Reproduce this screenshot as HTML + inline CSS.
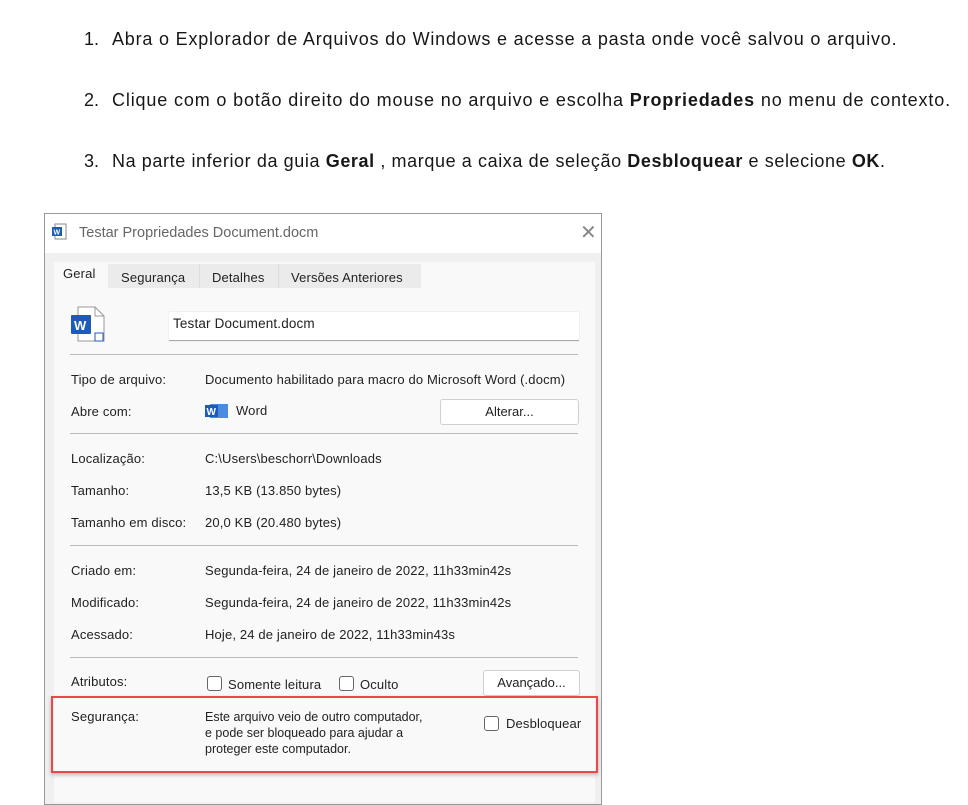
<!DOCTYPE html>
<html><head><meta charset="utf-8"><style>
body{margin:0;width:968px;height:796px;background:#fff;position:relative;overflow:hidden;font-family:"Liberation Sans",sans-serif;color:#1e1e1e}
.a{position:absolute;white-space:nowrap}
.li{font-size:18px;color:#171717;letter-spacing:0.8px}
.n{position:absolute;left:84px;font-size:18px;color:#171717}
.d{font-size:13px;color:#222;letter-spacing:0.15px}
.cb{position:absolute;width:13px;height:13px;border:1px solid #666;border-radius:3px;background:#fff}
.hr{position:absolute;left:70px;width:508px;height:1px;background:#bbb}
.btn{position:absolute;background:#fff;border:1px solid #d0d0d0;border-radius:3px;font-size:13px;text-align:center;color:#222}
</style></head><body>
<div class="n" style="top:29px">1.</div>
<div class="a li" style="left:112px;top:29px">Abra o Explorador de Arquivos do Windows e acesse a pasta onde você salvou o arquivo.</div>
<div class="n" style="top:90px">2.</div>
<div class="a li" style="left:112px;top:90px;letter-spacing:0.85px">Clique com o botão direito do mouse no arquivo e escolha <b>Propriedades</b> no menu de contexto.</div>
<div class="n" style="top:151px">3.</div>
<div class="a li" style="left:112px;top:151px;letter-spacing:0.6px">Na parte inferior da guia <b>Geral</b> , marque a caixa de seleção <b>Desbloquear</b> e selecione <b>OK</b>.</div>

<div class="a" style="left:44px;top:213px;width:556px;height:590px;border:1px solid #999;background:#f0f0f0"></div>
<div class="a" style="left:45px;top:214px;width:556px;height:39px;background:#fff"></div>
<svg class="a" style="left:51px;top:223px" width="18" height="20"><rect x="4" y="1" width="11" height="15" fill="#fff" stroke="#888"/><rect x="1" y="4" width="10" height="9" fill="#1e5bb8"/><text x="2.5" y="11.5" font-size="7" fill="#fff" font-family="Liberation Sans" font-weight="bold">W</text></svg>
<div class="a" style="left:79px;top:225px;font-size:14.5px;color:#666">Testar Propriedades Document.docm</div>
<div class="a" style="left:580px;top:220px;font-size:20px;color:#888">✕</div>
<div class="a" style="left:54px;top:262px;width:541px;height:540px;background:#f9f9f9"></div>
<div class="a d" style="left:63px;top:266px">Geral</div>
<div class="a" style="left:108px;top:264px;width:313px;height:24px;background:#ebebeb"></div>
<div class="a" style="left:199px;top:264px;width:1px;height:24px;background:#ddd"></div>
<div class="a" style="left:278px;top:264px;width:1px;height:24px;background:#ddd"></div>
<div class="a d" style="left:121px;top:270px">Segurança</div>
<div class="a d" style="left:212px;top:270px">Detalhes</div>
<div class="a d" style="left:291px;top:270px">Versões Anteriores</div>
<svg class="a" style="left:68px;top:305px" width="45" height="40"><path d="M10 2h17l9 9v25H10z" fill="#fff" stroke="#999"/><path d="M27 2v9h9" fill="none" stroke="#999"/><rect x="3" y="10" width="20" height="19" rx="1" fill="#1e5bb8"/><text x="6" y="25" font-size="13" fill="#fff" font-weight="bold" font-family="Liberation Sans">W</text><path d="M27 28h8v8h-8z" fill="none" stroke="#1e5bb8"/></svg>
<div class="a" style="left:169px;top:312px;width:410px;height:28px;background:#fff;border-bottom:1px solid #aaa;box-shadow:0 0 1px #ccc"></div>
<div class="a d" style="left:173px;top:316px;font-size:13.5px">Testar Document.docm</div>
<div class="hr" style="top:354px"></div>
<div class="a d" style="left:71px;top:372px">Tipo de arquivo:</div>
<div class="a d" style="left:205px;top:372px">Documento habilitado para macro do Microsoft Word (.docm)</div>
<div class="a d" style="left:71px;top:404px">Abre com:</div>
<svg class="a" style="left:205px;top:403px" width="24" height="16"><rect x="5" y="1" width="18" height="14" fill="#4a8ae0"/><rect x="0" y="2" width="13" height="12" fill="#1e5bb8"/><text x="1.5" y="12" font-size="10" fill="#fff" font-weight="bold" font-family="Liberation Sans">W</text></svg>
<div class="a d" style="left:236px;top:403px">Word</div>
<div class="btn" style="left:440px;top:399px;width:137px;height:24px;line-height:24px">Alterar...</div>
<div class="hr" style="top:433px"></div>
<div class="a d" style="left:71px;top:451px">Localização:</div>
<div class="a d" style="left:205px;top:451px">C:\Users\beschorr\Downloads</div>
<div class="a d" style="left:71px;top:483px">Tamanho:</div>
<div class="a d" style="left:205px;top:483px">13,5 KB (13.850 bytes)</div>
<div class="a d" style="left:71px;top:515px">Tamanho em disco:</div>
<div class="a d" style="left:205px;top:515px">20,0 KB (20.480 bytes)</div>
<div class="hr" style="top:545px"></div>
<div class="a d" style="left:71px;top:563px">Criado em:</div>
<div class="a d" style="left:205px;top:563px">Segunda-feira, 24 de janeiro de 2022, 11h33min42s</div>
<div class="a d" style="left:71px;top:595px">Modificado:</div>
<div class="a d" style="left:205px;top:595px">Segunda-feira, 24 de janeiro de 2022, 11h33min42s</div>
<div class="a d" style="left:71px;top:627px">Acessado:</div>
<div class="a d" style="left:205px;top:627px">Hoje, 24 de janeiro de 2022, 11h33min43s</div>
<div class="hr" style="top:657px"></div>
<div class="a d" style="left:71px;top:674px">Atributos:</div>
<div class="cb" style="left:207px;top:676px"></div>
<div class="a d" style="left:228px;top:677px">Somente leitura</div>
<div class="cb" style="left:339px;top:676px"></div>
<div class="a d" style="left:360px;top:677px">Oculto</div>
<div class="btn" style="left:483px;top:670px;width:95px;height:24px;line-height:24px">Avançado...</div>
<div class="a" style="left:51px;top:696px;width:543px;height:73px;border:2px solid #e8474c;box-shadow:0 2px 4px rgba(0,0,0,.25)"></div>
<div class="a d" style="left:71px;top:709px">Segurança:</div>
<div class="a" style="left:205px;top:709px;font-size:12.5px;line-height:16px;color:#222">Este arquivo veio de outro computador,<br>e pode ser bloqueado para ajudar a<br>proteger este computador.</div>
<div class="cb" style="left:484px;top:716px"></div>
<div class="a d" style="left:506px;top:716px">Desbloquear</div>
</body></html>
